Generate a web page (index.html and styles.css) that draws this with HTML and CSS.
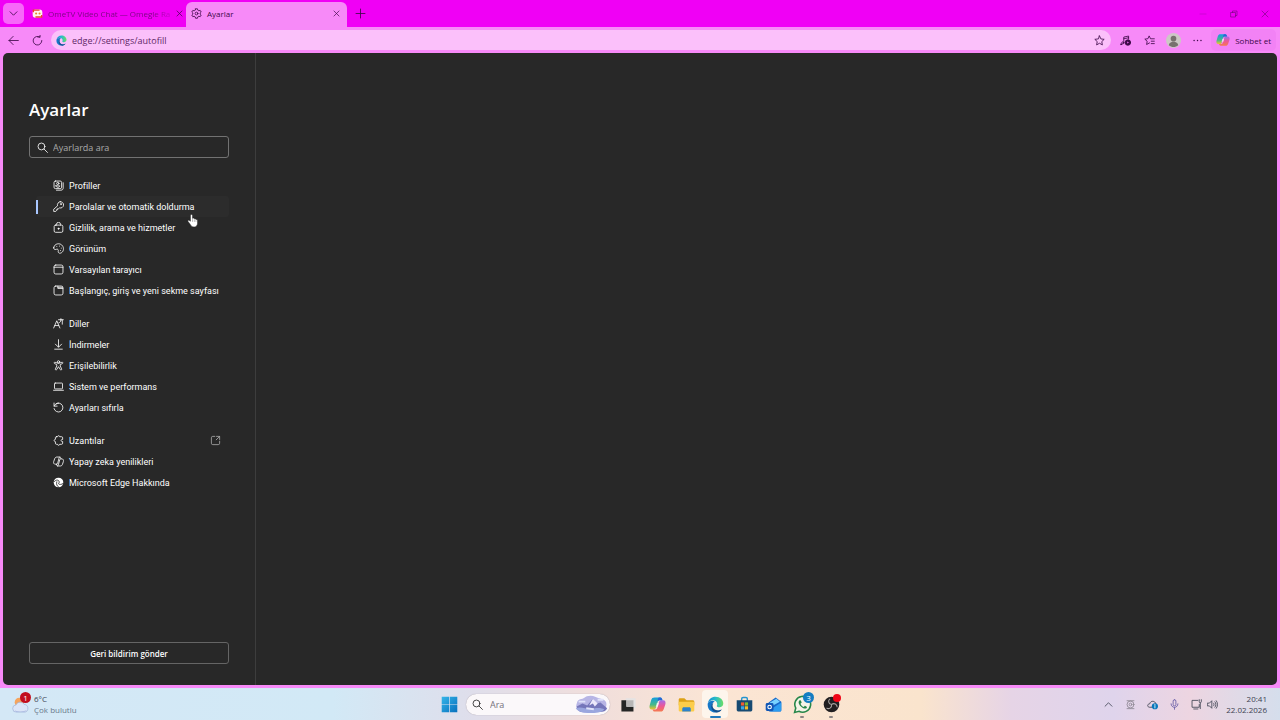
FILE: index.html
```html
<!DOCTYPE html>
<html lang="tr">
<head>
    <meta charset="UTF-8">
    <meta name="viewport" content="width=device-width, initial-scale=1.0">
    <title>Ayarlar</title>
    <link rel="stylesheet" href="styles.css">
</head>
<body>
    <div class="browser">
        <!-- Tab strip -->
        <header class="tab-strip">
            <button class="tab-menu" aria-label="Sekme menüsü">
                <svg class="icon" viewBox="0 0 16 16"><path d="M3 5.500l5 5 5-5"/></svg>
            </button>
            <div class="tab">
                <svg class="tab-icon" viewBox="0 0 16 16">
                    <rect x="1" y="2" width="14" height="12" rx="4" fill="#fff4ee"/>
                    <path d="M2 6V3h9M14 10v3H5" fill="none" stroke="#e9432f" stroke-width="2"/>
                    <circle cx="6" cy="8" r="1.500" fill="#e58a2c"/><circle cx="11" cy="8" r="1.500" fill="#e58a2c"/>
                </svg>
                <span class="tab-title">OmeTV Video Chat — Omegle Ra</span>
                <button class="tab-close" aria-label="Kapat"><svg class="icon" viewBox="0 0 16 16"><path d="M3.500 3.500l9 9M12.500 3.500l-9 9"/></svg></button>
            </div>
            <div class="tab tab-active">
                <svg class="icon tab-icon" viewBox="0 0 16 16">
                    <path d="M6.600 1.200h2.800l.5 2 1.500.9 2-.6 1.400 2.400-1.500 1.400v1.500l1.500 1.400-1.400 2.400-2-.6-1.500.9-.5 2H6.600l-.5-2-1.500-.9-2 .6-1.400-2.400 1.500-1.400V7.300L1.200 5.900l1.400-2.400 2 .6 1.500-.9z"/>
                    <circle cx="8" cy="8" r="2"/>
                </svg>
                <span class="tab-title">Ayarlar</span>
                <button class="tab-close" aria-label="Kapat"><svg class="icon" viewBox="0 0 16 16"><path d="M3.500 3.500l9 9M12.500 3.500l-9 9"/></svg></button>
            </div>
            <button class="new-tab" aria-label="Yeni sekme"><svg class="icon" viewBox="0 0 16 16"><path d="M8 1.500v13M1.500 8h13"/></svg></button>
            <div class="window-controls">
                <button class="minimize" aria-label="Simge durumuna küçült"><svg class="icon" viewBox="0 0 16 16"><path d="M2 8h12"/></svg></button>
                <button aria-label="Önceki boyut"><svg class="icon" viewBox="0 0 16 16"><path d="M2 5h9v9H2zM5 5V2h9v9h-3"/></svg></button>
                <button aria-label="Pencereyi kapat"><svg class="icon" viewBox="0 0 16 16"><path d="M2 2l12 12M14 2L2 14"/></svg></button>
            </div>
        </header>

        <!-- Address bar -->
        <div class="toolbar">
            <button class="tool" aria-label="Geri"><svg class="icon" viewBox="0 0 16 16"><path d="M15 8H1.500M7.500 2l-6 6 6 6"/></svg></button>
            <button class="tool" aria-label="Yenile"><svg class="icon" viewBox="0 0 16 16"><path d="M11.500 3A6.300 6.300 0 1 0 14.300 8M8.500 3h3.200V0"/></svg></button>
            <div class="address">
                <svg class="edge-small" viewBox="0 0 24 24"><use href="#edge-logo"/></svg>
                <input type="text" class="address-input" aria-label="Adres çubuğu" value="edge://settings/autofill">
                <button class="tool" aria-label="Sık kullanılanlara ekle"><svg class="icon" viewBox="0 0 16 16"><path d="M8 1.300l2 4.400 4.800.6-3.500 3.300.9 4.800L8 12l-4.200 2.400.9-4.800L1.200 6.300 6 5.700z"/></svg></button>
            </div>
            <div class="tools">
                <button class="tool" aria-label="Medya">
                    <svg class="icon" viewBox="0 0 16 16"><path d="M5.500 11V3l7-1.500V6M5.500 5.500l7-1.500"/><circle cx="4" cy="11.500" r="1.500"/><circle cx="1.500" cy="13.500" r=".8"/><circle cx="11.500" cy="11" r="4" fill="currentColor"/><path d="M10.500 9.500v3l2.500-1.500z" fill="#f7f" stroke="none"/></svg>
                </button>
                <button class="tool" aria-label="Sık kullanılanlar">
                    <svg class="icon" viewBox="0 0 16 16"><path d="M8 11.500l-4.200 2.300.8-4.700L1.200 6l4.500-.6L7.500 1.300l2 4.200H15M10.500 9H15M10.500 12.500H15"/></svg>
                </button>
                <button class="tool" aria-label="Profil">
                    <svg class="avatar" viewBox="0 0 16 16"><circle cx="8" cy="8" r="8" fill="#ccc8c5"/><circle cx="8" cy="6" r="3" fill="#77716e"/><path d="M3 13c0-5 10-5 10 0-3 2.500-7 2.500-10 0z" fill="#77716e"/></svg>
                </button>
                <button class="tool" aria-label="Ayarlar ve daha fazlası">
                    <svg class="icon dots" viewBox="0 0 16 16"><path d="M3 8h.1M8 8h.1M13 8h.1"/></svg>
                </button>
                <button class="chat-btn"><svg class="copilot" viewBox="0 0 24 24"><use href="#copilot-logo"/></svg>Sohbet et</button>
            </div>
        </div>

        <!-- Settings page -->
        <div class="page">
            <aside class="sidebar">
                <h1 class="title">Ayarlar</h1>
                <div class="search">
                    <svg class="icon" viewBox="0 0 16 16"><circle cx="6.500" cy="6.500" r="5"/><path d="M10.200 10.200l5 5"/></svg>
                    <input type="search" placeholder="Ayarlarda ara" aria-label="Ayarlarda ara">
                </div>

                <nav class="menu">
                    <div class="menu-group">
                        <a href="#profiller"><svg class="icon" viewBox="0 0 16 16"><rect x="1.500" y="1.500" width="11" height="11" rx="2"/><circle cx="7" cy="5" r="1.700"/><path d="M4.200 8.500h5.600c0 3-5.600 3-5.600 0zM14.800 4v7.500c0 2-1 3.300-3.300 3.300H5"/></svg>Profiller</a>
                        <a href="#autofill" class="active"><svg class="icon" viewBox="0 0 16 16"><path d="M10.500 1a4.600 4.600 0 1 1-1 9L8 11.200H6.500v1.500H5v1.500l-1 1H1V12L6.600 7A4.600 4.600 0 0 1 10.500 1z"/><circle cx="11.500" cy="4.500" r=".7"/></svg>Parolalar ve otomatik doldurma</a>
                        <a href="#gizlilik"><svg class="icon" viewBox="0 0 16 16"><rect x="1.700" y="4.500" width="12.600" height="10.500" rx="2"/><path d="M5 4.500V3.500a3 3 0 0 1 6 0v1"/><circle cx="8" cy="9.700" r=".8" fill="currentColor"/></svg>Gizlilik, arama ve hizmetler</a>
                        <a href="#gorunum"><svg class="icon" viewBox="0 0 16 16"><path d="M1 7C1.500 2.500 6 .3 10 1.400c4 1.200 6.200 5.600 4.800 9.600-1.300 3.600-5.600 5.200-7 2.600-.7-1.500.6-2.700-.5-4C6 8 4.500 9.800 3 9.500 1.700 9.300 1 8.300 1 7z"/><path d="M5.500 5h.1M9.500 4.500h.1M12 7.500h.1M11 11h.1"/></svg>Görünüm</a>
                        <a href="#tarayici"><svg class="icon" viewBox="0 0 16 16"><rect x="1.500" y="1.500" width="13" height="13" rx="2.500"/><path d="M1.500 4.700h13"/></svg>Varsayılan tarayıcı</a>
                        <a href="#baslangic"><svg class="icon" viewBox="0 0 16 16"><rect x="1.500" y="1.500" width="13" height="13" rx="2.500"/><path d="M7 1.700V5h7.300M7.500 3.300h6.300"/></svg>Başlangıç, giriş ve yeni sekme sayfası</a>
                    </div>
                    <div class="menu-group">
                        <a href="#diller"><svg class="icon" viewBox="0 0 16 16"><path d="M1 14.500L5.500 4 10 14.500M2.700 11h5.600M8 2.500h7M11.500 1v2M13.500 3v6M8.500 7c2-.5 3-2 3-4"/></svg>Diller</a>
                        <a href="#indirmeler"><svg class="icon" viewBox="0 0 16 16"><path d="M8 1v10.500M3.500 7.500L8 12l4.500-4.500M2.500 14.800h11"/></svg>İndirmeler</a>
                        <a href="#erisilebilirlik"><svg class="icon" viewBox="0 0 16 16"><circle cx="8" cy="2.700" r="1.700"/><path d="M6.500 4.500L3 3.300c-1.400-.4-1.900 1.400-.7 1.900L5.500 6.700v2L3.500 13c-.5 1.500 1.200 2.200 1.900.9L8 9.700l2.600 4.200c.7 1.300 2.400.6 1.900-.9l-2-4.300v-2l3.200-1.500c1.200-.5.700-2.300-.7-1.900L9.500 4.500z"/></svg>Erişilebilirlik</a>
                        <a href="#sistem"><svg class="icon" viewBox="0 0 16 16"><rect x="2.200" y="3" width="11.600" height="8.500" rx="1"/><path d="M.8 13.500h14.400"/></svg>Sistem ve performans</a>
                        <a href="#sifirla"><svg class="icon" viewBox="0 0 16 16"><path d="M1.500 1.500V6H6M1.700 6A6.500 6.500 0 1 1 1.500 9.500M4.500 2.700A6.500 6.500 0 0 1 8 1.500"/></svg>Ayarları sıfırla</a>
                    </div>
                    <div class="menu-group">
                        <a href="#uzantilar"><svg class="icon" viewBox="0 0 16 16"><path d="M5 2.500h1.500c.3-2 3-2 3.300 0h2.700c1 0 1.500.5 1.500 1.500v2.500c-3-.3-3 3.300 0 3V12c0 1-.5 1.500-1.500 1.500H9.800c-.3 2-3 2-3.300 0H5c-1 0-1.500-.5-1.500-1.500V9.700C1 9.500 1 6.500 3.500 6.300V4c0-1 .5-1.500 1.500-1.500z"/></svg>Uzantılar
                            <svg class="icon external" viewBox="0 0 16 16"><path d="M7 2H4a2 2 0 0 0-2 2v8a2 2 0 0 0 2 2h8a2 2 0 0 0 2-2V9M9.500 2H14v4.500M14 2L9 7"/></svg></a>
                        <a href="#yapayzeka"><svg class="icon" viewBox="0 0 16 16"><path d="M5 12H3.500C1.200 12 .5 10 1 8.300l1.300-4C2.800 2.700 4 1.500 5.500 1.500h4c1.500 0 1.700 1.500 2 2.700h1.200c2.200 0 2.900 2 2.400 3.800l-1.300 4c-.5 1.600-1.500 2.500-3 2.500h-4C5 14.500 5 12 5 12zM5 12c1 0 1.500-.5 1.800-1.500L8.500 4c.3-1.500.7-2.500 1.500-2.500M11.500 4.200c-1 0-1.500.5-1.800 1.500L8 12c-.3 1.500-.7 2.500-1.500 2.500"/></svg>Yapay zeka yenilikleri</a>
                        <a href="#hakkinda"><svg class="icon" viewBox="0 0 16 16"><circle cx="8" cy="8" r="7" fill="currentColor" stroke="none"/><path d="M1.500 7c3-4 7.500-3 7.500.5 0 1.500-1 1.500-1 2.200 0 1.300 4.500 2 7-.5M5.500 7c-1 3.500 0 6 3 8" stroke="#282828"/></svg>Microsoft Edge Hakkında</a>
                    </div>
                </nav>

                <button class="feedback">Geri bildirim gönder</button>
            </aside>
            <main class="content"></main>
        </div>
    </div>

    <footer class="taskbar">
        <div class="weather">
            <svg class="weather-icon" viewBox="0 0 20 20">
                <circle cx="8" cy="8" r="5" fill="#f5a45d"/>
                <path d="M5 19a4 4 0 0 1-.5-8C6 7 12 7 13.500 10.500 19 10.500 19 19 14 19z" fill="#dbe5f7" stroke="#a2b4d8" stroke-width=".8"/>
                <path d="M3 17c3 2 9 2 13 0-1 2-3 2-5 2H6c-1 0-2-.5-3-2z" fill="#a9b9e2"/>
            </svg>
            <span class="badge badge-weather">1</span>
            <div class="weather-text"><span>6°C</span><span class="muted">Çok bulutlu</span></div>
        </div>

        <div class="apps">
            <button class="app" aria-label="Başlat"><svg viewBox="0 0 24 24"><path d="M1 1h10.500v10.500H1zM12.500 1H23v10.500H12.500zM1 12.500h10.500V23H1zM12.500 12.500H23V23H12.500z" fill="url(#win-fill)"/></svg></button>
            <div class="task-search">
                <svg class="icon" viewBox="0 0 16 16"><circle cx="6.500" cy="6.500" r="5"/><path d="M10.200 10.200l5 5"/></svg>
                <input type="search" placeholder="Ara" aria-label="Ara">
                <svg class="scene" viewBox="0 0 34 20">
                    <path d="M2 9C3 3 8 5 10 3s7-3 12-1 10 2 11 6-1 8-6 9-18 3-22 0-4-5-3-8z" fill="#b7b5e5"/>
                    <path d="M2 12l6-3 5 2 6-7 4 5 4-1 7 6c-1 3-4 4-8 4H7c-3-1-5-3-5-6z" fill="#7576ba"/>
                    <path d="M19 4l-4 7 4-2 2 3 3-3z" fill="#ece9fb"/><path d="M1 14c7-3 12 3 20 0 4-1 8 0 10 1-3 4-9 4-15 4S3 18 1 14z" fill="#9aa6de"/>
                    <path d="M4 7h7M24 5h6M12 14l8 1" stroke="#dfe2fa" stroke-width="2"/>
                </svg>
            </div>
            <button class="app" aria-label="Görev görünümü"><svg viewBox="0 0 24 24"><path d="M8 3h14v14H8z" fill="#e6e3e3"/><path d="M2 6h7v9h10v7H2z" fill="#252525"/><path d="M9 6h10v9H9z" fill="#b8b6b6"/></svg></button>
            <button class="app" aria-label="Copilot"><svg viewBox="0 0 24 24"><use href="#copilot-logo"/></svg></button>
            <button class="app" aria-label="Dosya Gezgini"><svg viewBox="0 0 24 24"><path d="M1 5c0-1 .5-2 2-2h6l3 3h9c1 0 2 1 2 2v5H1z" fill="#dca116"/><path d="M1 8h22v12c0 1-1 2-2 2H3c-1 0-2-1-2-2z" fill="#fccd4a"/><path d="M6 22v-4c0-1 1-2 2-2h8c1 0 2 1 2 2v4z" fill="#2d82cb"/></svg></button>
            <button class="app app-open" aria-label="Microsoft Edge"><svg viewBox="0 0 24 24"><use href="#edge-logo"/></svg></button>
            <button class="app" aria-label="Microsoft Store"><svg viewBox="0 0 24 24"><path d="M8 7V4c0-1 .5-2 2-2h4c1.500 0 2 1 2 2v3" fill="none" stroke="#2494cf" stroke-width="2"/><path d="M1 6h22v13c0 2-1 3-3 3H4c-2 0-3-1-3-3z" fill="#174a72"/><path d="M7 9h4.500v4.500H7z" fill="#f15a32"/><path d="M12.500 9H17v4.500h-4.500z" fill="#82bd34"/><path d="M7 14.500h4.500V19H7z" fill="#38a8e8"/><path d="M12.500 14.500H17V19h-4.500z" fill="#f8bd29"/></svg></button>
            <button class="app" aria-label="Outlook"><svg viewBox="0 0 24 24"><path d="M5 9l10-7 8 6v12c0 1-1 2-2 2H7c-1 0-2-1-2-2z" fill="#1768c9"/><path d="M7 9l9-5 5 4-13 7z" fill="#79d2ff"/><path d="M6 20l17-11v11c0 1-1 2-2 2H8z" fill="#2c9cf0"/><rect x="1" y="10" width="11" height="11" rx="2" fill="#1257b5"/><circle cx="6.500" cy="15.500" r="2.500" fill="none" stroke="#fff" stroke-width="1.600"/></svg></button>
            <button class="app app-running" aria-label="WhatsApp">
                <svg class="large" viewBox="0 0 24 24"><path d="M2 22l1.500-5.500A10 10 0 1 1 7.500 20.500z" fill="#f5f4e8" stroke="#27874a" stroke-width="2"/><path d="M8.500 6.500c-3 2-.5 6 1.500 8s6 4 7.500 1.500c.5-1-.5-1.500-2.500-2.500l-1.500 1.500c-2-.7-3.300-2-4-4L11 9.500c-.8-2-1.500-3.300-2.500-3z" fill="#27874a"/></svg>
                <span class="badge badge-count">3</span>
            </button>
            <button class="app app-running" aria-label="OBS Studio">
                <svg viewBox="0 0 24 24"><circle cx="12" cy="12" r="11" fill="#211e20"/><path d="M12 12c-5-1-5-6-2-8M12 12c4-3 8 0 8 4M12 12c1 5-4 7-7 5" fill="none" stroke="#a5a09e" stroke-width="1.500"/></svg>
                <span class="badge badge-record"></span>
            </button>
        </div>

        <div class="tray">
            <button aria-label="Gizli simgeler"><svg class="icon" viewBox="0 0 16 16"><path d="M3 10.500l5-5 5 5"/></svg></button>
            <button aria-label="Güvenlik"><svg class="icon faint" viewBox="0 0 16 16"><circle cx="8" cy="8" r="5"/><circle cx="8" cy="8" r="2"/><path d="M3 2.500h10M3 14h10"/></svg></button>
            <button aria-label="OneDrive"><svg class="icon" viewBox="0 0 16 16"><path d="M8 12H4C0 12 0 7 4 7c1-5 8-5 9 0"/><circle cx="11.500" cy="10.500" r="4.500" fill="#0879bd" stroke="none"/><path d="M11.500 10v3M11.500 8v.8" stroke="#fff"/></svg></button>
            <button aria-label="Mikrofon"><svg class="icon mic" viewBox="0 0 16 16"><rect x="6" y="1" width="4" height="9" rx="2"/><path d="M3 7c0 7 10 7 10 0M8 12.500V15"/></svg></button>
            <button class="status" aria-label="Ağ ve ses">
                <svg class="icon" viewBox="0 0 16 16"><path d="M10 2H1.500v10H12V8M4 14.500h6M12 1v3c0 2 3 2 3 0V1M13.500 6v8"/></svg>
                <svg class="icon" viewBox="0 0 16 16"><path d="M1 6h2.500L7 2.500v11L3.500 10H1zM9.500 6c1 1 1 3 0 4M11.500 4c2 2 2 6 0 8M13.500 2.500c2.500 3 2.500 8 0 11"/></svg>
            </button>
            <div class="clock"><time>20:41</time><span>22.02.2026</span></div>
        </div>
    </footer>

    <!-- Mouse pointer -->
    <svg class="pointer" viewBox="0 0 16 20"><path d="M5 11V3c0-2.500 3-2.500 3 0v4c1-1 2.500-.5 2.700.7 1-.6 2.200 0 2.400 1 1.200-.4 2.200.3 2.200 1.500V14c0 3-2 5.500-5 5.500-3.500 0-4.500-2-6-4.500L1.500 11.500c-1-1.600 1-2.500 2-1.500z" fill="#fff" stroke="#222" stroke-width=".7"/><path d="M8 8v4M10.700 8.500V12M13 9.500V12" stroke="#555" stroke-width=".6"/></svg>

    <!-- Shared logos -->
    <svg class="defs" aria-hidden="true">
        <defs>
            <linearGradient id="win-fill" x1="0" y1="0" x2="1" y2="1"><stop offset="0" stop-color="#35b5e9"/><stop offset="1" stop-color="#0870bd"/></linearGradient>
            <linearGradient id="edge-top" x1="0" y1="0" x2="1" y2="0"><stop offset="0" stop-color="#168ad4"/><stop offset=".5" stop-color="#27bcc9"/><stop offset="1" stop-color="#6dde64"/></linearGradient>
            <linearGradient id="cop-left" x1="0" y1="0" x2="0" y2="1"><stop offset="0" stop-color="#139de0"/><stop offset=".6" stop-color="#46b98a"/><stop offset="1" stop-color="#f0c52c"/></linearGradient>
            <linearGradient id="cop-right" x1="0" y1="0" x2="0" y2="1"><stop offset="0" stop-color="#a26cec"/><stop offset=".5" stop-color="#ec5797"/><stop offset="1" stop-color="#f57a4d"/></linearGradient>
            <symbol id="edge-logo" viewBox="0 0 24 24">
                <path d="M1 11C2 4.500 6.500 1 12 1c6.500 0 11 4.500 11 9.500 0 5-5.500 6.500-8.500 4.500-1.500-1 0-1.500 0-3.500 0-3.500-3-5.500-6-5.500-3.500 0-6 2-7.500 5z" fill="url(#edge-top)"/>
                <path d="M1 11c1.500-4 7-5.500 10-3-4 1-5 5-3.500 8.500 2 4.500 8 5.500 13 2.500C14 27 0 23 1 11z" fill="#1677c7"/>
                <path d="M9 9.500c-3 5 0 11 7 11 2 0 3.500-.7 5-1.700C17 26 7 24 6 16c-.3-3 1-5.500 3-6.500z" fill="#12508f"/>
            </symbol>
            <symbol id="copilot-logo" viewBox="0 0 24 24">
                <path d="M8 2h8c2 0 2.500 2 3 4h-4c-2 0-2.500 1-3 3l-2 7c-.5 2-1.500 3-3 3H4c-3 0-4-3-3-6l2-7c1-3 2-4 5-4z" fill="url(#cop-left)"/>
                <path d="M16 22H8c-2 0-2.500-2-3-3h4c2 0 2.500-1 3-3l2-7c.5-2 1.500-3 3-3h3c3 0 4 3 3 6l-2 6c-1 3-2 4-5 4z" fill="url(#cop-right)"/>
                <path d="M14 2h2c2 0 2.500 2 3 4h-4c-1 0-2 .5-2.500 2C12.500 5 12 3 14 2z" fill="#2865d4"/>
                <path d="M11 10h3l-1.500 5h-3z" fill="#fff" opacity=".65"/>
            </symbol>
        </defs>
    </svg>
</body>
</html>
```
FILE: styles.css
```css
* {
    margin: 0;
    padding: 0;
    box-sizing: border-box;
}

body {
    height: 100vh;
    display: flex;
    flex-direction: column;
    overflow: hidden;
    font-family: 'Open Sans', 'Noto Sans', sans-serif;
    font-size: 8px;
    color: #fff;
}

button,
input {
    font: inherit;
    color: inherit;
    background: none;
    border: none;
    outline: none;
}

button {
    display: flex;
    align-items: center;
    justify-content: center;
    flex-shrink: 0;
}

input {
    min-width: 0;
}

a {
    color: inherit;
    text-decoration: none;
}

svg {
    display: block;
    flex-shrink: 0;
}

.icon {
    width: 11px;
    height: 11px;
    fill: none;
    stroke: currentColor;
    stroke-width: 1.2;
    stroke-linecap: round;
    stroke-linejoin: round;
}

.defs {
    position: absolute;
    width: 0;
    height: 0;
}

.browser {
    flex: 1;
    min-height: 0;
    display: flex;
    flex-direction: column;
    background: #f78af8;
    color: #3d0848;
}

/* Tab strip */
.tab-strip {
    display: flex;
    height: 27px;
    background: #f000f5;
}

.tab-menu {
    width: 21px;
    height: 21px;
    margin: 3px 1px 0 3px;
    border-radius: 5px;
    background: #f768f9;
}

.tab {
    display: flex;
    align-items: center;
    gap: 5px;
    width: 161px;
    padding: 0 6px 0 5px;
    color: #7d0885;
}

.tab:not(.tab-active) {
    padding-left: 7px;
}

.tab-active {
    margin-top: 2px;
    padding-bottom: 2px;
    border-radius: 6px 6px 0 0;
    background: #f78af8;
    color: #3d0848;
}

.tab-icon {
    width: 11px;
    height: 11px;
}

.tab-title {
    flex: 1;
    white-space: nowrap;
}

.tab:not(.tab-active) .tab-title {
    -webkit-mask-image: linear-gradient(90deg, #000 85%, rgba(0, 0, 0, 0.3));
    mask-image: linear-gradient(90deg, #000 85%, rgba(0, 0, 0, 0.3));
}

.tab-close {
    color: #3d0848;
}

.tab-close .icon {
    width: 9px;
    height: 9px;
}

.new-tab {
    width: 26px;
}

.window-controls {
    display: flex;
    margin-left: auto;
    color: #6f0878;
}

.window-controls button {
    width: 31px;
}

.window-controls .minimize {
    color: #b806bf;
}

.window-controls .icon {
    width: 8px;
    height: 8px;
}

/* Toolbar */
.toolbar {
    display: flex;
    align-items: center;
    height: 26px;
    padding: 0 4px 0 1px;
}

.tool {
    width: 24px;
    height: 20px;
}

.address {
    flex: 1;
    display: flex;
    align-items: center;
    gap: 5px;
    height: 20px;
    margin-left: 2px;
    padding-left: 5px;
    border-radius: 10px;
    background: #fbc0fa;
}

.address-input {
    flex: 1;
    font-size: 9px;
    color: #5f2867;
}

.edge-small {
    width: 11px;
    height: 11px;
}

.tools {
    display: flex;
    align-items: center;
    padding-left: 2px;
}

.avatar {
    width: 15px;
    height: 15px;
}

.dots {
    stroke-width: 2;
}

.chat-btn {
    gap: 5px;
    height: 22px;
    margin-left: 2px;
    padding: 0 5px;
    border-radius: 5px;
    background: #f282f5;
    white-space: nowrap;
}

.copilot {
    width: 14px;
    height: 14px;
}

/* Settings */
.page {
    flex: 1;
    min-height: 0;
    display: flex;
    margin: 0 3px 3px;
    border-radius: 5px;
    background: #282828;
    color: #fff;
}

.sidebar {
    display: flex;
    flex-direction: column;
    width: 253px;
    padding: 43px 26px 21px 26px;
    border-right: 1px solid #3d3d3d;
}

.content {
    flex: 1;
}

.title {
    font-size: 17px;
    font-weight: 600;
    line-height: 28px;
}

.search {
    display: flex;
    align-items: center;
    gap: 5px;
    height: 22px;
    margin-top: 12px;
    padding: 0 7px;
    border: 1px solid #727272;
    border-radius: 3px;
    font-size: 9px;
}

.search input {
    flex: 1;
}

.search input::placeholder {
    color: #aaa;
}

.menu {
    display: flex;
    flex-direction: column;
    gap: 12px;
    margin-top: 17px;
    padding-left: 7px;
    font-family: Roboto, 'Open Sans', sans-serif;
    font-size: 9px;
}

.menu-group a {
    display: flex;
    align-items: center;
    gap: 5px;
    height: 21px;
    padding: 0 8px 0 17px;
    border-radius: 3px;
    white-space: nowrap;
}

.menu-group .active {
    padding-left: 0;
    background: #2c2c2c;
}

.active::before {
    content: "";
    width: 2px;
    height: 14px;
    margin-right: 10px;
    background: #a9c7ff;
}

.menu .external {
    margin-left: auto;
    color: #aaa;
}

.feedback {
    height: 22px;
    margin-top: auto;
    border: 1px solid #656565;
    border-radius: 3px;
    font-weight: 600;
}

/* Taskbar */
.taskbar {
    display: grid;
    grid-template-columns: 1fr auto 1fr;
    align-items: center;
    height: 32px;
    background: linear-gradient(90deg, #d4e8f6 0%, #d2e9f6 26%, #dfdeeb 37%, #f0dedc 46%, #fbe5d4 56%, #fae4cd 72%, #e6d4e6 79%, #dfd4ec 87%, #edd5e1 93%, #d5deec 100%);
    color: #3d4351;
}

.weather {
    position: relative;
    display: flex;
    align-items: center;
    gap: 4px;
    padding-left: 12px;
}

.weather-icon {
    width: 18px;
    height: 18px;
}

.weather-text,
.clock {
    display: flex;
    flex-direction: column;
    line-height: 11px;
}

.muted {
    color: #69788a;
}

.badge {
    position: absolute;
    border-radius: 50%;
    text-align: center;
    color: #fff;
}

.badge-weather {
    top: -1px;
    left: 20px;
    width: 11px;
    height: 11px;
    line-height: 11px;
    background: #c20d1d;
}

.apps {
    display: flex;
    align-items: center;
    gap: 3px;
    padding-left: 4px;
}

.app {
    position: relative;
    width: 26px;
    height: 28px;
    border-radius: 4px;
}

.app:first-child {
    width: 18px;
}

.app svg {
    width: 17px;
    height: 17px;
}

.app .large {
    width: 19px;
    height: 19px;
}

.app-open {
    background: #fdf5ec;
}

.app-open::after,
.app-running::after {
    content: "";
    position: absolute;
    bottom: 0;
    width: 4px;
    height: 2px;
    border-radius: 1px;
    background: #8d8584;
}

.app-open::after {
    width: 11px;
    background: #1f78bc;
}

.badge-count {
    top: 2px;
    right: 1px;
    width: 11px;
    height: 11px;
    line-height: 11px;
    background: #147dc2;
}

.badge-record {
    top: 4px;
    right: 3px;
    width: 8px;
    height: 8px;
    background: #f00416;
}

.task-search {
    display: flex;
    align-items: center;
    gap: 7px;
    width: 144px;
    height: 21px;
    margin: 0 2px 0 5px;
    padding: 0 2px 0 6px;
    border-radius: 11px;
    background: #fbf8fa;
    box-shadow: 0 0 1px #9b929b;
    font-size: 9px;
    color: #222;
}

.task-search input {
    flex: 1;
}

.task-search input::placeholder {
    color: #75717a;
}

.scene {
    width: 34px;
    height: 19px;
}

.tray {
    display: flex;
    align-items: center;
    justify-content: flex-end;
    padding-right: 13px;
}

.tray button {
    width: 22px;
    height: 26px;
}

.tray .status {
    gap: 5px;
    width: 38px;
}

.tray .faint {
    color: #8b8590;
}

.tray .mic {
    color: #6258a4;
}

.clock {
    align-items: flex-end;
    margin-left: 3px;
}

/* Mouse pointer over the menu */
.pointer {
    position: absolute;
    top: 213px;
    left: 187px;
    width: 11px;
    height: 15px;
}
```
